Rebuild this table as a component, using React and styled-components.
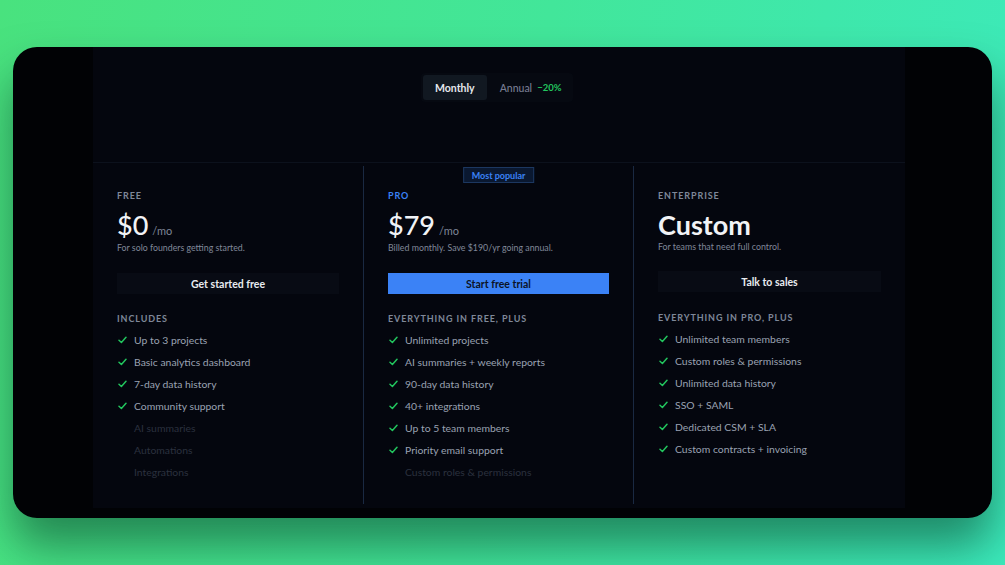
import React from "react";
import styled, { createGlobalStyle } from "styled-components";

const Global = createGlobalStyle`
  html, body { margin: 0; padding: 0; }
  body {
    font-family: Lato, "Noto Sans", Arial, sans-serif;
    -webkit-font-smoothing: antialiased;
  }
  * { box-sizing: border-box; }
`;

const Stage = styled.div`
  width: 1005px;
  height: 565px;
  overflow: hidden;
  padding: 47px 13px 0 13px;
  background: linear-gradient(100deg, #49e27e 0%, #42e69a 50%, #3ceabc 100%);
`;

const Card = styled.div`
  height: 471px;
  border-radius: 24px;
  background: #010205;
  padding: 0 87px 10px 80px;
  display: flex;
  box-shadow: 0 28px 46px rgba(8, 60, 40, 0.55);
`;

const Panel = styled.div`
  flex: 1;
  background: #04060e;
  display: flex;
  flex-direction: column;
  align-items: center;
  padding-top: 26px;
`;

const Toggle = styled.div`
  display: flex;
  align-items: center;
  padding: 2px;
  border-radius: 4px;
  background: #060911;
  width: 152px;
  margin-left: -4px;
`;

const ToggleBtn = styled.div`
  display: flex;
  align-items: center;
  gap: 5px;
  height: 25px;
  padding: 0 ${(p) => (p.$active ? "12px" : "13px")};
  border-radius: 3px;
  background: ${(p) => (p.$active ? "#111821" : "transparent")};
  color: ${(p) => (p.$active ? "#e6e9ee" : "#777c92")};
  font-size: 10.5px;
  font-weight: ${(p) => (p.$active ? 700 : 500)};
`;

const Discount = styled.span`
  color: #22c55e;
  font-weight: 700;
  font-size: 9.5px;
`;

const Grid = styled.div`
  margin-top: 60px;
  width: 100%;
  display: grid;
  grid-template-columns: 270px 271px 271px;
  border-top: 1px solid #0c111c;
  flex: 1;
`;

const Column = styled.div`
  position: relative;
  padding: 26px 24px 0 24px;
  margin-bottom: 4px;
  ${(p) =>
    p.$featured &&
    `
    margin-top: 3px;
    padding-top: 23px;
    border-left: 1px solid #1a2942;
    border-right: 1px solid #1a2942;
  `}
`;

const Badge = styled.div`
  position: absolute;
  top: 1px;
  left: 50%;
  transform: translateX(-50%);
  height: 16px;
  padding: 0 8px;
  display: flex;
  align-items: center;
  background: #0a1830;
  border: 1px solid #1c3760;
  color: #3b82f6;
  font-size: 9px;
  font-weight: 700;
  white-space: nowrap;
`;

const Tier = styled.div`
  font-size: 9px;
  line-height: 14px;
  font-weight: 700;
  letter-spacing: 0.9px;
  color: ${(p) => (p.$featured ? "#3b82f6" : "#7f8899")};
`;

const PriceRow = styled.div`
  margin-top: 7px;
  display: flex;
  align-items: baseline;
  gap: 4px;
  height: 30px;
`;

const Price = styled.span`
  font-size: 27px;
  line-height: ${(p) => (p.$custom ? "29px" : "30px")};
  font-weight: ${(p) => (p.$custom ? 700 : 500)};
  color: #f1f3f6;
`;

const Per = styled.span`
  font-size: 11px;
  color: #7d8596;
`;

const Desc = styled.div`
  margin-top: ${(p) => (p.$custom ? "0" : "1px")};
  font-size: 8.8px;
  line-height: 14px;
  color: #808899;
`;

const Button = styled.div`
  margin-top: ${(p) => (p.$custom ? "17px" : "18px")};
  height: 21px;
  display: flex;
  align-items: center;
  justify-content: center;
  font-size: 10.5px;
  font-weight: 700;
  background: ${(p) => (p.$primary ? "#3b82f6" : "#080b14")};
  color: ${(p) => (p.$primary ? "#0b1326" : "#e8ebf0")};
`;

const Section = styled.div`
  margin-top: ${(p) => (p.$custom ? "19px" : "18px")};
  font-size: 9px;
  line-height: 14px;
  font-weight: 700;
  letter-spacing: 0.9px;
  color: #7f8899;
`;

const List = styled.ul`
  list-style: none;
  margin: 3px 0 0 0;
  padding: 0;
`;

const Item = styled.li`
  display: flex;
  align-items: center;
  height: 22px;
  font-size: 10.4px;
  color: ${(p) => (p.$off ? "#2b313e" : "#9aa2b2")};
`;

const CheckSlot = styled.span`
  width: 17px;
  display: flex;
  align-items: center;
  padding-left: 1px;
`;

const Check = () => (
  <svg width="9" height="8" viewBox="0 0 9 8">
    <path d="M1 4.3 L3.4 6.5 L8 1.3" fill="none" stroke="#22c55e" strokeWidth="1.5" strokeLinecap="round" strokeLinejoin="round" />
  </svg>
);

const plans = [
  {
    tier: "FREE",
    price: "$0",
    per: "/mo",
    desc: "For solo founders getting started.",
    cta: "Get started free",
    section: "INCLUDES",
    features: [
      ["Up to 3 projects", true],
      ["Basic analytics dashboard", true],
      ["7-day data history", true],
      ["Community support", true],
      ["AI summaries", false],
      ["Automations", false],
      ["Integrations", false],
    ],
  },
  {
    tier: "PRO",
    featured: true,
    price: "$79",
    per: "/mo",
    desc: "Billed monthly. Save $190/yr going annual.",
    cta: "Start free trial",
    section: "EVERYTHING IN FREE, PLUS",
    features: [
      ["Unlimited projects", true],
      ["AI summaries + weekly reports", true],
      ["90-day data history", true],
      ["40+ integrations", true],
      ["Up to 5 team members", true],
      ["Priority email support", true],
      ["Custom roles & permissions", false],
    ],
  },
  {
    tier: "ENTERPRISE",
    custom: true,
    price: "Custom",
    desc: "For teams that need full control.",
    cta: "Talk to sales",
    section: "EVERYTHING IN PRO, PLUS",
    features: [
      ["Unlimited team members", true],
      ["Custom roles & permissions", true],
      ["Unlimited data history", true],
      ["SSO + SAML", true],
      ["Dedicated CSM + SLA", true],
      ["Custom contracts + invoicing", true],
    ],
  },
];

export default function App() {
  return (
    <>
      <Global />
      <Stage>
        <Card>
          <Panel>
            <Toggle>
              <ToggleBtn $active>Monthly</ToggleBtn>
              <ToggleBtn>
                Annual <Discount>−20%</Discount>
              </ToggleBtn>
            </Toggle>
            <Grid>
              {plans.map((p) => (
                <Column key={p.tier} $featured={p.featured}>
                  {p.featured && <Badge>Most popular</Badge>}
                  <Tier $featured={p.featured}>{p.tier}</Tier>
                  <PriceRow $custom={p.custom}>
                    <Price $custom={p.custom}>{p.price}</Price>
                    {p.per && <Per>{p.per}</Per>}
                  </PriceRow>
                  <Desc $custom={p.custom}>{p.desc}</Desc>
                  <Button $primary={p.featured} $custom={p.custom}>{p.cta}</Button>
                  <Section $custom={p.custom}>{p.section}</Section>
                  <List>
                    {p.features.map(([t, on]) => (
                      <Item key={t} $off={!on}>
                        <CheckSlot>{on && <Check />}</CheckSlot>
                        {t}
                      </Item>
                    ))}
                  </List>
                </Column>
              ))}
            </Grid>
          </Panel>
        </Card>
      </Stage>
    </>
  );
}
